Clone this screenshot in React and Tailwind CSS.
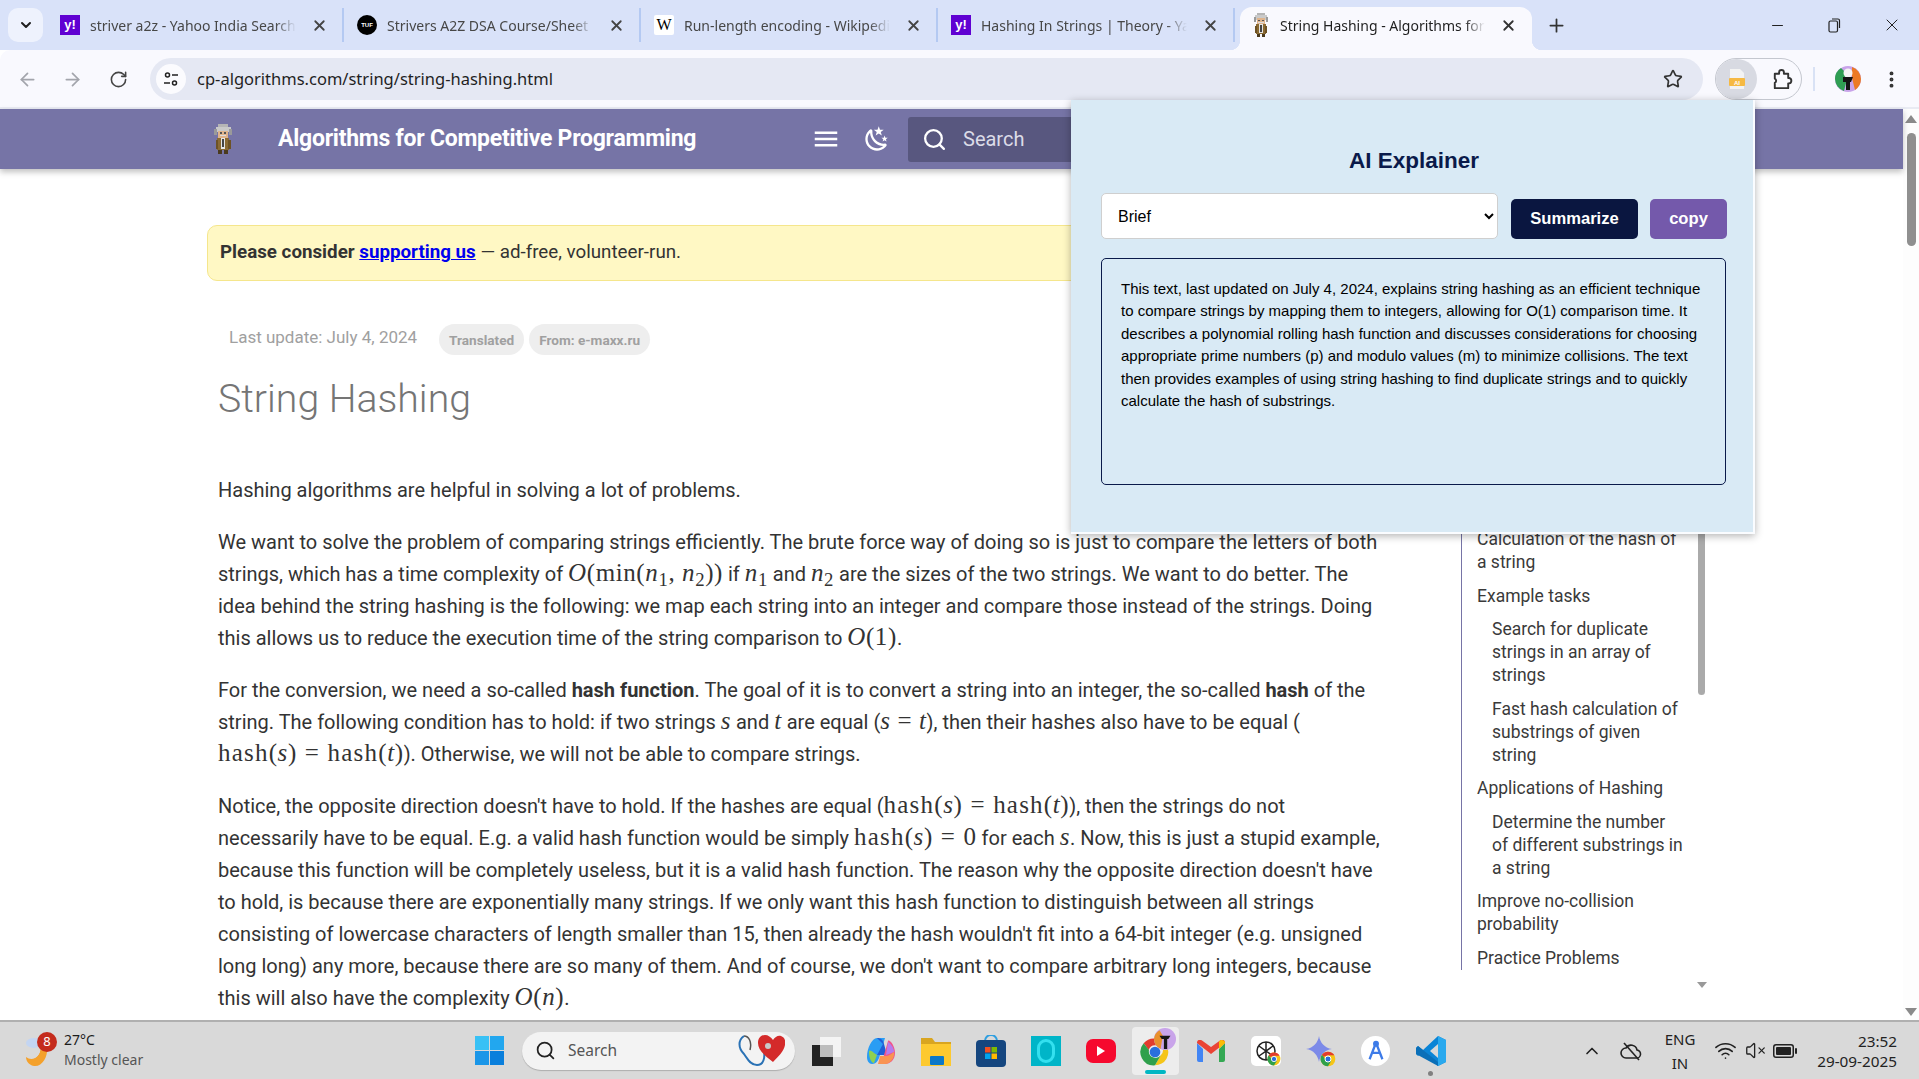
import { ArrowLeft, ArrowRight, RotateCw, Star, EllipsisVertical, ChevronDown, ChevronUp, X, Plus, Minus, Search, Wifi, VolumeX } from "lucide-react";

const Yahoo = () => (
  <div className="w-[20px] h-[20px] bg-[#6001d2] text-white text-[13px] font-bold flex items-center justify-center font-['Liberation_Sans',sans-serif] shrink-0">y!</div>
);
const Tuf = () => (
  <div className="w-[20px] h-[20px] rounded-full bg-black text-white text-[6px] font-bold flex items-center justify-center font-['Liberation_Sans',sans-serif] shrink-0">TUF</div>
);
const Wiki = () => (
  <div className="w-[20px] h-[20px] bg-white rounded-[2px] text-black text-[16px] flex items-center justify-center font-['Liberation_Serif',serif] shrink-0">W</div>
);

const Einstein = ({ className }) => (
  <svg viewBox="0 0 13 22" className={className} shapeRendering="crispEdges">
    <rect x="3" y="0" width="7" height="2" fill="#b5b5b5" />
    <rect x="1" y="2" width="11" height="4" fill="#c9c9c9" />
    <rect x="0" y="4" width="2" height="4" fill="#9a9a9a" />
    <rect x="11" y="4" width="2" height="4" fill="#9a9a9a" />
    <rect x="3" y="5" width="7" height="5" fill="#e0b48c" />
    <rect x="4" y="6" width="2" height="1" fill="#555" />
    <rect x="7" y="6" width="2" height="1" fill="#555" />
    <rect x="4" y="8" width="5" height="1" fill="#ddd" />
    <rect x="2" y="10" width="9" height="9" fill="#8a6a33" />
    <rect x="5" y="10" width="3" height="8" fill="#e4e4e4" />
    <rect x="6" y="11" width="1" height="6" fill="#444" />
    <rect x="1" y="12" width="2" height="6" fill="#6d5225" />
    <rect x="10" y="12" width="2" height="6" fill="#6d5225" />
    <rect x="3" y="19" width="3" height="3" fill="#4a3a1e" />
    <rect x="7" y="19" width="3" height="3" fill="#4a3a1e" />
  </svg>
);

const tabs = [
  { title: "striver a2z - Yahoo India Search", icon: <Yahoo /> },
  { title: "Strivers A2Z DSA Course/Sheet", icon: <Tuf /> },
  { title: "Run-length encoding - Wikipedia", icon: <Wiki /> },
  { title: "Hashing In Strings | Theory - Yahoo", icon: <Yahoo /> },
];

const Tab = ({ tab }) => (
  <div className="w-[297px] h-[34px] flex items-center pl-[13px] pr-[12px] border-r-2 border-[#b4c9f2] shrink-0">
    {tab.icon}
    <div className="ml-[10px] w-[206px] whitespace-nowrap overflow-hidden text-[14px] text-[#474747] [mask-image:linear-gradient(to_right,black_90%,transparent)]">{tab.title}</div>
    <X size={17} strokeWidth={2.5} className="ml-[15px] text-[#444]" />
  </div>
);

const TabStrip = () => (
  <div className="h-[50px] bg-[#d9e2f9] flex items-center pl-[8px] shrink-0 relative">
    <div className="w-[35px] h-[34px] mr-[4px] rounded-[10px] bg-[#eef2fd] flex items-center justify-center">
      <ChevronDown size={16} strokeWidth={3} className="text-[#1f1f1f]" />
    </div>
    {tabs.map((t) => <Tab key={t.title} tab={t} />)}
    <div className="relative ml-[5px] w-[292px] h-[43px] mt-[7px] pb-[7px] bg-[#f9f9fe] rounded-t-[12px] flex items-center pl-[12px] shrink-0">
      <Einstein className="w-[18px] h-[24px]" />
      <div className="ml-[10px] w-[205px] whitespace-nowrap overflow-hidden text-[14px] text-[#1f1f1f] [mask-image:linear-gradient(to_right,black_90%,transparent)]">String Hashing - Algorithms for Competitive</div>
      <X size={17} strokeWidth={2.5} className="ml-[15px] text-[#333]" />
      <div className="absolute bottom-0 -left-[10px] w-[10px] h-[10px] bg-[radial-gradient(circle_at_0_0,transparent_10px,#f9f9fe_10.5px)]" />
      <div className="absolute bottom-0 -right-[10px] w-[10px] h-[10px] bg-[radial-gradient(circle_at_100%_0,transparent_10px,#f9f9fe_10.5px)]" />
    </div>
    <Plus size={21} strokeWidth={2} className="ml-[14px] text-[#333]" />
    <Minus size={17} strokeWidth={1.5} className="ml-[202px] text-[#222]" />
    <svg viewBox="0 0 16 16" className="w-[16px] h-[16px] ml-[40px] text-[#222]" fill="none" stroke="currentColor" strokeWidth="1.2">
      <rect x="3" y="4" width="8.5" height="11" rx="1.5" />
      <path d="M6 2h6a1.5 1.5 0 0 1 1.5 1.5V11" />
    </svg>
    <X size={20} strokeWidth={1.2} className="ml-[40px] text-[#222]" />
  </div>
);

const Toolbar = () => (
  <div className="h-[59px] bg-[#f9f9fe] border-b-2 border-[#e9ebf3] rounded-tl-[10px] flex items-start pt-[8px] shrink-0 relative">
    <div className="h-[42px] flex items-center pl-[17px]">
      <ArrowLeft size={21} strokeWidth={2} className="text-[#a3a5ac]" />
      <ArrowRight size={21} strokeWidth={2} className="ml-[24px] text-[#a3a5ac]" />
      <RotateCw size={19} strokeWidth={2} className="ml-[26px] text-[#444]" />
    </div>
    <div className="ml-[22px] w-[1553px] h-[42px] rounded-full bg-[#e5e8f3] flex items-center pl-[6px] pr-[20px] shrink-0">
      <div className="w-[30px] h-[30px] rounded-full bg-[#fbfbfe] flex items-center justify-center">
        <svg viewBox="0 0 16 16" className="w-[16px] h-[16px]" fill="none" stroke="#222" strokeWidth="1.5">
          <circle cx="4.5" cy="4" r="2" />
          <path d="M9 4h6M1 12h6" />
          <circle cx="11.5" cy="12" r="2" />
        </svg>
      </div>
      <span className="ml-[11px] text-[16.5px] text-[#1f1f1f]">cp-algorithms.com/string/string-hashing.html</span>
      <Star size={20} strokeWidth={2} className="ml-auto text-[#333]" />
    </div>
    <div className="ml-[12px] w-[87px] h-[42px] rounded-full border border-[#c4c7cf] flex items-center shrink-0">
      <div className="w-[41px] h-[40px] rounded-full bg-[#d8dae2] flex items-center justify-center">
        <svg viewBox="0 0 16 20" className="w-[16px] h-[20px]">
          <path d="M1 0h10l4 4v16H1z" fill="#f3f3f3" />
          <rect x="0" y="9" width="16" height="8" rx="1" fill="#f6b942" />
          <text x="8" y="15.5" fontSize="6" fontWeight="700" fill="#fff" textAnchor="middle" fontFamily="Liberation Sans">AI</text>
        </svg>
      </div>
      <svg viewBox="0 0 24 24" className="ml-[13px] w-[23px] h-[23px]" fill="none" stroke="#333" strokeWidth="2" strokeLinejoin="round">
        <path d="M5 6h4.500V4.500a2.500 2.500 0 0 1 5 0V6H19v4.500h1a2.800 2.800 0 0 1 0 5.500h-1v5H5v-5.500a2.500 2.500 0 0 0 0-4.500z" />
      </svg>
    </div>
    <div className="h-[42px] flex items-center">
      <div className="ml-[11px] w-[2px] h-[24px] bg-[#d9e2f5]" />
      <svg viewBox="0 0 26 26" className="ml-[20px] w-[26px] h-[26px]">
        <circle cx="13" cy="13" r="13" fill="#c9a4ea" />
        <path d="M0 13a13 13 0 0 0 9 12L13 9 6 2A13 13 0 0 0 0 13z" fill="#2f9e53" />
        <path d="M17 1a13 13 0 0 1 9 12 13 13 0 0 1-6 11l-3-12z" fill="#ec7a24" />
        <circle cx="13" cy="7" r="4.5" fill="#f4f4f4" />
        <path d="M8 11h10l-2 5h-1v8h-4v-8h-3z" fill="#141414" />
      </svg>
      <EllipsisVertical size={21} strokeWidth={2.5} className="ml-[20px] text-[#333]" />
    </div>
  </div>
);

const Popup = () => (
  <div className="absolute top-[100px] left-[1071px] w-[684px] h-[434px] bg-[#d9eaf5] border-r-2 border-b-2 border-[#fafcff] shadow-[0_2px_8px_rgba(0,0,0,0.3)] pl-[30px] pr-[26px] pt-[47px] font-['Liberation_Sans',sans-serif] z-10">
    <h2 className="text-[22.5px] leading-[28px] font-bold text-center text-[#0a1a4a]">AI Explainer</h2>
    <div className="flex items-start mt-[18px] h-[46px]">
      <select defaultValue="Brief" className="w-[397px] h-[46px] bg-white border border-[#cfcfcf] rounded-[5px] pl-[12px] pr-[4px] text-[16px] text-black">
        <option>Brief</option>
        <option>Detailed</option>
      </select>
      <button className="ml-[13px] mt-[6px] w-[127px] h-[40px] rounded-[5px] bg-[#0a1640] text-white text-[16.6px] font-bold">Summarize</button>
      <button className="ml-[12px] mt-[6px] w-[77px] h-[40px] rounded-[5px] bg-[#7459ab] text-white text-[16.6px] font-bold">copy</button>
    </div>
    <div className="mt-[19px] w-[625px] h-[227px] border border-[#0a1a4a] rounded-[5px] pl-[19px] pr-[20px] pt-[19px] text-[15px] leading-[22.4px] text-black">
      This text, last updated on July 4, 2024, explains string hashing as an efficient technique to compare strings by mapping them to integers, allowing for O(1) comparison time. It describes a polynomial rolling hash function and discusses considerations for choosing appropriate prime numbers (p) and modulo values (m) to minimize collisions. The text then provides examples of using string hashing to find duplicate strings and to quickly calculate the hash of substrings.
    </div>
  </div>
);

const M = ({ children }) => (
  <span className="font-['Liberation_Serif',serif] text-[25px] leading-[20px] tracking-[0.6px]">{children}</span>
);
const Hash = () => <span className="tracking-[1.2px]">hash</span>;
const Eq = () => <span className="mx-[8px]">=</span>;

const Header = () => (
  <div className="h-[60px] bg-[#7674a6] shadow-[0_3px_6px_rgba(0,0,0,0.25)] flex items-center pl-[210px] shrink-0 relative">
    <Einstein className="w-[26px] h-[30px]" />
    <span className="ml-[42px] w-[420px] text-[23px] font-bold text-white tracking-[-0.25px] whitespace-nowrap">Algorithms for Competitive Programming</span>
    <svg viewBox="0 0 24 24" className="ml-[113px] w-[30px] h-[30px]" fill="#fff">
      <path d="M3 6h18v2H3zM3 11h18v2H3zM3 16h18v2H3z" />
    </svg>
    <svg viewBox="0 0 24 24" className="ml-[22px] w-[28px] h-[28px]" fill="#fff">
      <path d="M17.75,4.09L15.22,6.03L16.13,9.09L13.5,7.28L10.87,9.09L11.78,6.03L9.25,4.09L12.44,4L13.5,1L14.56,4L17.75,4.09M21.25,11L19.61,12.25L20.2,14.23L18.5,13.06L16.8,14.23L17.39,12.25L15.75,11L17.81,10.95L18.5,9L19.19,10.95L21.25,11M18.97,15.95C19.8,15.87 20.69,17.05 20.16,17.8C19.84,18.25 19.5,18.67 19.08,19.07C15.17,23 8.84,23 4.94,19.07C1.03,15.17 1.03,8.83 4.94,4.93C5.34,4.53 5.76,4.17 6.21,3.85C6.96,3.32 8.14,4.21 8.06,5.04C7.79,7.9 8.75,10.87 10.95,13.06C13.14,15.26 16.1,16.22 18.97,15.95M17.33,17.97C14.5,17.81 11.7,16.64 9.53,14.5C7.36,12.31 6.2,9.5 6.04,6.68C3.23,9.82 3.34,14.64 6.35,17.66C9.37,20.67 14.19,20.78 17.33,17.97Z" />
    </svg>
    <div className="ml-[17px] w-[500px] h-[45px] bg-[#58577f] rounded-[3px] flex items-center pl-[14px]">
      <Search size={25} strokeWidth={2.2} className="text-white" />
      <span className="ml-[16px] text-[20px] text-[#dcdce8]">Search</span>
    </div>
  </div>
);

const toc = [
  { t: "Calculation of the hash of a string" },
  { t: "Example tasks" },
  { t: "Search for duplicate strings in an array of strings", sub: true },
  { t: "Fast hash calculation of substrings of given string", sub: true },
  { t: "Applications of Hashing" },
  { t: "Determine the number of different substrings in a string", sub: true },
  { t: "Improve no-collision probability" },
  { t: "Practice Problems" },
];

const Toc = () => (
  <div className="relative ml-[71px] w-[245px] h-[830px] shrink-0">
    <div className="h-[801px] border-l border-[#7674a6] overflow-hidden flex flex-col justify-end pl-[15px] pb-[0px]">
      {toc.map((item) => (
        <div key={item.t} className={`text-[17.5px] leading-[22.9px] text-[#3a3a3a] mt-[10.8px] ${item.sub ? "pl-[15px] w-[207px]" : "w-[205px]"}`}>{item.t}</div>
      ))}
    </div>
    <div className="absolute left-[237px] top-[300px] w-[7px] h-[226px] bg-[#aaaaaa] rounded-b-[4px]" />
    <div className="absolute left-[236px] top-[813px] w-0 h-0 border-x-[5px] border-t-[6px] border-x-transparent border-t-[#999]" />
  </div>
);

const Article = () => (
  <div className="pl-[218px] flex items-start flex-1 min-h-0 overflow-hidden text-[20px] leading-[32px] text-[#333]">
    <div className="w-[1172px] shrink-0 pt-[56px]">
      <div className="-ml-[11px] w-[1240px] h-[56px] bg-[#fff8c4] border border-[#f5e68c] rounded-[10px] flex items-center pl-[12px] pb-[2px] text-[18.75px]">
        <b className="font-bold">Please consider&nbsp;</b>
        <a className="font-bold text-[#0000ee] underline">supporting us</a>
        <span>&nbsp;— ad-free, volunteer-run.</span>
      </div>
      <div className="mt-[43px] h-[31px] flex items-center pl-[11px]">
        <span className="text-[17px] text-[#a0a0a0] -mt-[6px]">Last update: July 4, 2024</span>
        <span className="ml-[22px] h-[31px] px-[10px] rounded-full bg-[#eeeeee] text-[13.6px] font-bold text-[#a0a0a0] flex items-center">Translated</span>
        <span className="ml-[5px] h-[31px] px-[10px] rounded-full bg-[#eeeeee] text-[13.6px] font-bold text-[#a0a0a0] flex items-center">From: e-maxx.ru</span>
      </div>
      <h1 className="mt-[20px] text-[39.2px] leading-[48px] font-light text-[#757575]">String Hashing</h1>
      <p className="mt-[51px]">Hashing algorithms are helpful in solving a lot of problems.</p>
      <p className="mt-[20px]">
        We want to solve the problem of comparing strings efficiently. The brute force way of doing so is just to compare the letters of both strings, which has a time complexity of <M><i>O</i>(min(<i>n</i><sub>1</sub>, <i>n</i><sub>2</sub>))</M> if <M><i>n</i><sub>1</sub></M> and <M><i>n</i><sub>2</sub></M> are the sizes of the two strings. We want to do better. The idea behind the string hashing is the following: we map each string into an integer and compare those instead of the strings. Doing this allows us to reduce the execution time of the string comparison to <M><i>O</i>(1)</M>.
      </p>
      <p className="mt-[20px]">
        For the conversion, we need a so-called <b>hash function</b>. The goal of it is to convert a string into an integer, the so-called <b>hash</b> of the string. The following condition has to hold: if two strings <M><i>s</i></M> and <M><i>t</i></M> are equal (<M><i>s</i> = <i>t</i></M>), then their hashes also have to be equal (<br />
        <M><Hash />(<i>s</i>)<Eq /><Hash />(<i>t</i>)</M>). Otherwise, we will not be able to compare strings.
      </p>
      <p className="mt-[20px]">
        Notice, the opposite direction doesn't have to hold. If the hashes are equal (<M><Hash />(<i>s</i>)<Eq /><Hash />(<i>t</i>)</M>), then the strings do not necessarily have to be equal. E.g. a valid hash function would be simply <M><Hash />(<i>s</i>)<Eq />0</M> for each <M><i>s</i></M>. Now, this is just a stupid example, because this function will be completely useless, but it is a valid hash function. The reason why the opposite direction doesn't have to hold, is because there are exponentially many strings. If we only want this hash function to distinguish between all strings consisting of lowercase characters of length smaller than 15, then already the hash wouldn't fit into a 64-bit integer (e.g. unsigned long long) any more, because there are so many of them. And of course, we don't want to compare arbitrary long integers, because this will also have the complexity <M><i>O</i>(<i>n</i>)</M>.
      </p>
    </div>
    <Toc />
  </div>
);

const PageScrollbar = () => (
  <div className="w-[16px] bg-[#fdfdfd] flex flex-col items-center shrink-0 pt-[6px] pb-[4px]">
    <div className="w-0 h-0 border-x-[6px] border-b-[8px] border-x-transparent border-b-[#8a8a8a]" />
    <div className="mt-[10px] w-[9px] h-[113px] rounded-full bg-[#8f8f8f]" />
    <div className="mt-auto w-0 h-0 border-x-[6px] border-t-[8px] border-x-transparent border-t-[#8a8a8a]" />
  </div>
);

// taskbar icons
const WinLogo = () => (
  <svg viewBox="0 0 29 29" className="w-[29px] h-[29px]">
    <rect width="14" height="14" fill="#38c1f5" />
    <rect x="15" width="14" height="14" fill="#22a7ef" />
    <rect y="15" width="14" height="14" fill="#1a96e8" />
    <rect x="15" y="15" width="14" height="14" fill="#0a7fdc" />
  </svg>
);
const Slot = ({ children }) => <div className="w-[55px] h-[58px] flex items-center justify-center relative shrink-0">{children}</div>;

const ChromeBadge = ({ className }) => (
  <svg viewBox="0 0 48 48" className={className}>
    <circle cx="24" cy="24" r="22" fill="#f5c518" />
    <path d="M24 2a22 22 0 0 1 19 11H24l-14 4L6 11A22 22 0 0 1 24 2z" fill="#e23b2e" />
    <path d="M6 11a22 22 0 0 0 18 35l9-15-18-8z" fill="#2fa04c" />
    <circle cx="24" cy="24" r="9" fill="#2a6fdb" stroke="#fff" strokeWidth="3" />
  </svg>
);

const TaskIcons = () => (
  <>
    <Slot>
      <svg viewBox="0 0 30 30" className="w-[30px] h-[32px]">
        <rect x="9" y="1" width="21" height="20" fill="#f4f4f4" />
        <rect x="1" y="9" width="21" height="21" fill="#222" />
        <rect x="9" y="9" width="13" height="12" fill="#bdbdbd" />
      </svg>
    </Slot>
    <Slot>
      <svg viewBox="0 0 30 30" className="w-[30px] h-[30px]">
        <path d="M11 2h8l-5 17c-1 4-3 9-8 9-3 0-5-3-5-7 0-9 5-19 10-19z" fill="#2a9df4" />
        <path d="M11 2c4 0 6 2 7 6l3 11H11l6-11z" fill="#1e5fd8" />
        <path d="M19 28h-7c4-1 5-5 6-9l4-14c1-2 7 4 7 12 0 7-5 11-10 11z" fill="#f0568b" />
        <path d="M3 16c0-3 3-1 5 1l3 2-3 8c-3 0-5-6-5-11z" fill="#8fd14f" />
        <path d="M22 6c3 2 6 6 6 10l-8 3z" fill="#b57bee" />
        <path d="M12 28l2-8h6c3 0 5-2 8-4 1 6-4 12-9 12z" fill="#f99452" />
      </svg>
    </Slot>
    <Slot>
      <svg viewBox="0 0 30 30" className="w-[30px] h-[30px]">
        <path d="M0 2h11l3 4h16v24H0z" fill="#d9a520" />
        <rect y="8" width="30" height="22" fill="#fdc92f" />
        <rect x="9" y="20" width="14" height="9" rx="1" fill="#0c78c8" />
      </svg>
    </Slot>
    <Slot>
      <svg viewBox="0 0 30 32" className="w-[30px] h-[32px]">
        <path d="M9 6a6 6 0 0 1 12 0" fill="none" stroke="#2f9fe0" strokeWidth="2" />
        <rect y="5" width="30" height="27" rx="4" fill="#15467f" />
        <rect x="9" y="12" width="5.5" height="5.5" fill="#f25022" />
        <rect x="15.5" y="12" width="5.5" height="5.5" fill="#7fba00" />
        <rect x="9" y="18.5" width="5.5" height="5.5" fill="#00a4ef" />
        <rect x="15.5" y="18.5" width="5.5" height="5.5" fill="#ffb900" />
      </svg>
    </Slot>
    <Slot>
      <div className="w-[30px] h-[30px] bg-[#00b5c8] flex items-center justify-center">
        <div className="w-[18px] h-[24px] rounded-full border-[3px] border-[#33e0ef]" />
      </div>
    </Slot>
    <Slot>
      <div className="w-[30px] h-[24px] bg-[#f6092e] rounded-[7px] flex items-center justify-center">
        <div className="w-0 h-0 border-y-[5px] border-l-[8px] border-y-transparent border-l-white" />
      </div>
    </Slot>
    <Slot>
      <div className="absolute left-[4px] top-[5px] w-[47px] h-[48px] rounded-[4px] bg-[#ededed]" />
      <svg viewBox="0 0 48 48" className="relative w-[32px] h-[32px] mt-[2px] -ml-[2px]">
        <path d="M24 4a20 20 0 0 1 17.3 10H24a10 10 0 0 0-9.5 7L7 11A20 20 0 0 1 24 4z" fill="#e23b2e" />
        <path d="M41.3 14A20 20 0 0 1 24 44l8.7-15a10 10 0 0 0 0-15z" fill="#f5c518" />
        <path d="M7 11a20 20 0 0 0 17 33l8.7-15A10 10 0 0 1 15 21z" fill="#2fa04c" />
        <circle cx="24" cy="24" r="8" fill="#2a6fdb" />
      </svg>
      <svg viewBox="0 0 20 20" className="absolute left-[26px] top-[5px] w-[22px] h-[24px]">
        <circle cx="10" cy="10" r="10" fill="#c9a4ea" />
        <path d="M0 10a10 10 0 0 0 6 9l2-12-3-5a10 10 0 0 0-5 8z" fill="#e9912d" />
        <path d="M5 7h10l-2 3h-1v9H9v-9H7z" fill="#171717" />
      </svg>
      <div className="absolute left-[17px] top-[48px] w-[21px] h-[4px] rounded-full bg-[#00b7c3]" />
    </Slot>
    <Slot>
      <svg viewBox="0 0 28 22" className="w-[28px] h-[22px]">
        <path d="M0 3v17a2 2 0 0 0 2 2h4V9z" fill="#4285f4" />
        <path d="M22 9v13h4a2 2 0 0 0 2-2V3z" fill="#34a853" />
        <path d="M0 3l14 11L28 3v-.5C28 0 25 -1 23 .5L14 7 5 .5C3 -1 0 0 0 2.500z" fill="#ea4335" />
        <path d="M22 1.500V9l6-6v-.5c0-2-3-3-5-2z" fill="#fbbc04" />
      </svg>
    </Slot>
    <Slot>
      <div className="relative w-[30px] h-[30px] bg-white rounded-[5px] flex items-center justify-center">
        <svg viewBox="0 0 24 24" className="w-[24px] h-[24px]" fill="none" stroke="#222" strokeWidth="1.5">
          <circle cx="12" cy="12" r="9" />
          <path d="M12 3v9l-7 5M12 12l7 5M5 7l7 5 7-5M12 12v9" />
        </svg>
        <ChromeBadge className="absolute right-[0px] bottom-[0px] w-[14px] h-[14px]" />
      </div>
    </Slot>
    <Slot>
      <div className="relative w-[30px] h-[32px]">
        <svg viewBox="0 0 24 24" className="w-[26px] h-[28px]">
          <path d="M12 0c1 6 5 11 12 12-7 1-11 6-12 12-1-6-5-11-12-12 7-1 11-6 12-12z" fill="#7c8ae8" />
        </svg>
        <ChromeBadge className="absolute right-[0px] bottom-[0px] w-[16px] h-[16px]" />
      </div>
    </Slot>
    <Slot>
      <div className="w-[29px] h-[30px] rounded-full bg-white flex items-center justify-center">
        <svg viewBox="0 0 24 24" className="w-[22px] h-[24px]" fill="none" stroke="#3d7be8" strokeWidth="2.5">
          <path d="M12 3L5 21M12 3l7 18M8 14h8" />
          <circle cx="12" cy="4" r="2" fill="#3d7be8" />
        </svg>
      </div>
    </Slot>
    <Slot>
      <svg viewBox="0 0 30 32" className="w-[30px] h-[32px]">
        <path d="M22 1l8 4v22l-8 4L7 17l-5 4-2-2v-6l2-2 5 4z" fill="#0a84d6" />
        <path d="M22 1l8 4v22l-8 4z" fill="#2aa9ee" />
        <path d="M22 9l-8 7 8 7z" fill="#d9d9d9" />
        <path d="M0 13l2-2 20 16v4L0 19z" fill="#0a6fb8" />
      </svg>
      <div className="absolute left-[25px] top-[49px] w-[5px] h-[5px] rounded-full bg-[#808080]" />
    </Slot>
  </>
);

const Taskbar = () => (
  <div className="h-[59px] bg-[#d9d9d9] border-t-2 border-[#b0b0b0] flex items-center shrink-0 font-['Noto_Sans',sans-serif] text-[#222]">
    <div className="w-[475px] flex items-center pl-[25px] shrink-0">
      <div className="relative w-[30px] h-[36px]">
        <svg viewBox="0 0 30 36" className="w-[30px] h-[36px]">
          <ellipse cx="9" cy="10" rx="8" ry="5" fill="#c3d5f2" />
          <path d="M22 15A13 13 0 0 1 2 26c6 2 13-1 14-11z" fill="#f0901e" />
          <path d="M22 15c1 9-5 19-13 18C3 32 1 27 1 24c5 4 14 2 15-9z" fill="#f4a12c" />
        </svg>
        <div className="absolute left-[12px] -top-[1px] w-[20px] h-[20px] rounded-full bg-[#c42b1c] text-white text-[13px] flex items-center justify-center">8</div>
      </div>
      <div className="ml-[9px] leading-[20px] -mt-[1px]">
        <div className="text-[14px] text-[#1c1c1c]">27°C</div>
        <div className="text-[14px] text-[#555]">Mostly clear</div>
      </div>
    </div>
    <WinLogo />
    <div className="ml-[18px] mr-[3px] w-[273px] h-[38px] rounded-full bg-[#f3f3f3] shadow-[0_1px_1px_rgba(0,0,0,0.2)] flex items-center pl-[13px] relative shrink-0">
      <Search size={21} strokeWidth={2} className="text-[#222]" />
      <span className="ml-[12px] text-[15.5px] text-[#555]">Search</span>
      <svg viewBox="0 0 50 36" className="absolute right-[10px] top-[0px] w-[50px] h-[36px]">
        <path d="M9 4C3 8 3 16 9 22c3 4 6 11 13 11s8-8 7-14" fill="none" stroke="#2a72b5" strokeWidth="2" />
        <path d="M9 4c5 0 8 6 6 14" fill="none" stroke="#555" strokeWidth="1.5" />
        <path d="M38 30C30 24 23 18 23 11c0-5 3-8 7-8 3 0 6 2 8 5 2-3 5-5 8-4 3 1 5 4 4 9-1 6-7 12-12 17z" fill="#d42a2a" />
        <circle cx="33" cy="14" r="3" fill="#c9c9c9" />
      </svg>
    </div>
    <TaskIcons />
    <ChevronUp size={20} strokeWidth={2} className="ml-[124px] text-[#222]" />
    <svg viewBox="0 0 24 24" className="ml-[17px] w-[24px] h-[24px]" fill="none" stroke="#222" strokeWidth="1.6">
      <path d="M7 19h10a4 4 0 0 0 1-8 6 6 0 0 0-11-2 5 5 0 0 0 0 10z" />
      <path d="M5 4l15 17" />
    </svg>
    <div className="ml-[17px] w-[40px] text-center text-[15px] leading-[24px]">ENG<br />IN</div>
    <Wifi size={23} strokeWidth={1.7} className="ml-[14px]" />
    <VolumeX size={21} strokeWidth={1.5} className="ml-[8px]" />
    <svg viewBox="0 0 24 14" className="ml-[7px] w-[24px] h-[14px]" fill="#222">
      <path d="M3 0h15a3 3 0 0 1 3 3v8a3 3 0 0 1-3 3H3a3 3 0 0 1-3-3V3a3 3 0 0 1 3-3zm0 1.500A1.500 1.500 0 0 0 1.500 3v8A1.500 1.500 0 0 0 3 12.500h15a1.500 1.500 0 0 0 1.500-1.500V3A1.500 1.500 0 0 0 18 1.500z" />
      <rect x="3" y="3" width="15" height="8" rx="1" />
      <rect x="22" y="4" width="2" height="6" rx="1" />
    </svg>
    <div className="ml-auto mr-[22px] text-right text-[15.3px] leading-[20px]">
      <div>23:52</div>
      <div>29-09-2025</div>
    </div>
  </div>
);

export default function App() {
  return (
    <div className="w-[1919px] h-[1079px] overflow-hidden relative flex flex-col bg-white font-['Noto_Sans',sans-serif]">
      <TabStrip />
      <Toolbar />
      <div className="flex-1 min-h-0 flex font-['Roboto',sans-serif]">
        <div className="flex-1 min-w-0 flex flex-col">
          <Header />
          <Article />
        </div>
        <PageScrollbar />
      </div>
      <Popup />
      <Taskbar />
    </div>
  );
}
